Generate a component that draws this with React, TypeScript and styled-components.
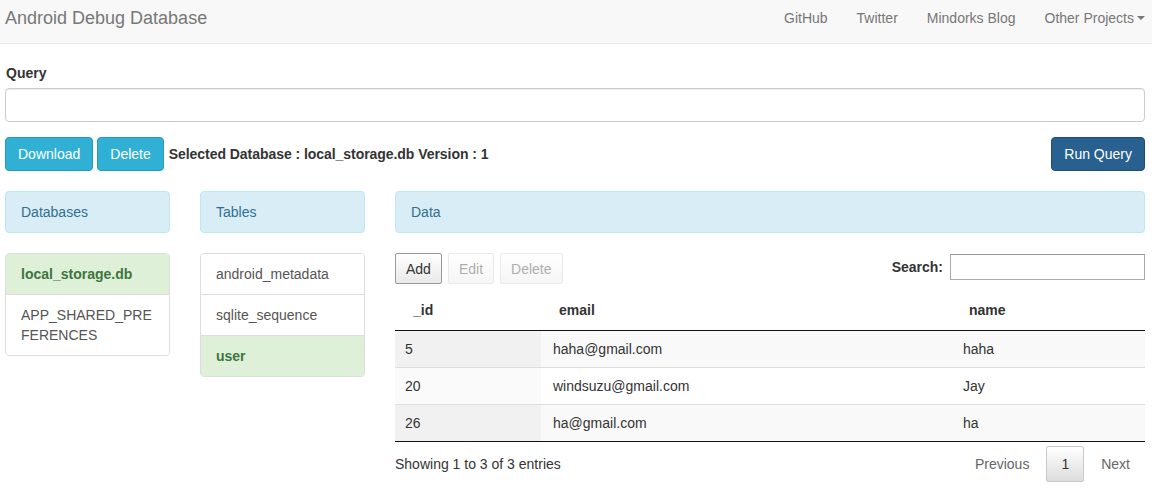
import * as React from 'react'
import styled, { createGlobalStyle } from 'styled-components'

const GlobalStyle = createGlobalStyle`
  * { box-sizing: border-box; }
  body {
    margin: 0;
    font-family: "Liberation Sans", Arial, sans-serif;
    font-size: 14px;
    line-height: 20px;
    color: #333;
    background: #fff;
  }
`

const Navbar = styled.nav`
  height: 44px;
  background: #f8f8f8;
  border-bottom: 1px solid #e7e7e7;
  display: flex;
  align-items: center;
  justify-content: space-between;
  padding: 0 7px 0 5px;
`

const Brand = styled.div`
  font-size: 18px;
  color: #777;
  margin-top: -8px;
`

const NavLinks = styled.div`
  display: flex;
  gap: 29px;
  margin-top: -8px;
`

const NavLink = styled.a`
  color: #777;
  text-decoration: none;
  display: flex;
  align-items: center;
`

const Caret = styled.span`
  display: inline-block;
  width: 0;
  height: 0;
  margin-left: 3px;
  border-top: 4px solid #777;
  border-left: 4px solid transparent;
  border-right: 4px solid transparent;
`

const Container = styled.div`
  padding: 19px 7px 0 5px;
`

const Label = styled.label`
  display: block;
  font-weight: bold;
  margin: 0 0 5px 1px;
`

const QueryInput = styled.input`
  display: block;
  width: 100%;
  height: 34px;
  border: 1px solid #ccc;
  border-radius: 4px;
  box-shadow: inset 0 1px 1px rgba(0, 0, 0, 0.075);
  margin-bottom: 15px;
  font: inherit;
`

const ActionRow = styled.div`
  display: flex;
  align-items: center;
  gap: 4px;
  margin-bottom: 20px;
`

const Btn = styled.button<{ $variant: 'info' | 'primary' }>`
  height: 34px;
  padding: 0 12px;
  font: inherit;
  color: #fff;
  border-radius: 4px;
  border: 1px solid ${p => (p.$variant === 'info' ? '#269abc' : '#204d74')};
  background: ${p => (p.$variant === 'info' ? '#31b0d5' : '#286090')};
  cursor: pointer;
`

const Selected = styled.span`
  font-weight: bold;
  margin-left: 1px;
  flex: 1;
  letter-spacing: -0.05px;
`

const Columns = styled.div`
  display: grid;
  grid-template-columns: 165px 165px 1fr;
  column-gap: 30px;
  align-items: start;
`

const PanelHeading = styled.div`
  height: 42px;
  padding: 10px 15px;
  background: #d9edf7;
  border: 1px solid #bce8f1;
  border-radius: 4px;
  color: #31708f;
  margin-bottom: 20px;
`

const ListGroup = styled.div`
  margin-top: 1px;
  border: 1px solid #ddd;
  border-radius: 4px;
  overflow: hidden;
`

const ListItem = styled.div<{ $active?: boolean }>`
  padding: 10px 15px;
  border-top: 1px solid #ddd;
  background: ${p => (p.$active ? '#dff0d8' : '#fff')};
  color: ${p => (p.$active ? '#3c763d' : '#555')};
  font-weight: ${p => (p.$active ? 'bold' : 'normal')};
  word-break: break-all;
  &:first-child { border-top: 0; }
`

const Toolbar = styled.div`
  display: flex;
  align-items: center;
  justify-content: space-between;
`

const ToolButtons = styled.div`
  display: flex;
  gap: 6px;
`

const SmallBtn = styled.button<{ $disabled?: boolean }>`
  height: 31px;
  padding: 0 10px;
  font: inherit;
  color: #333;
  border: 1px solid ${p => (p.$disabled ? '#ccc' : '#999')};
  border-radius: 2px;
  background: linear-gradient(to bottom, #fff 0%, #e9e9e9 100%);
  opacity: ${p => (p.$disabled ? 0.4 : 1)};
`

const SearchWrap = styled.label`
  display: flex;
  align-items: center;
  font-weight: bold;
  margin-top: -4px;
`

const SearchInput = styled.input`
  margin-left: 7px;
  width: 195px;
  height: 26px;
  border: 1px solid #aaa;
  border-top-color: #999;
  border-radius: 0;
  font: inherit;
`

const Table = styled.table`
  width: 100%;
  border-collapse: collapse;
  margin-top: 6px;
  border-bottom: 1px solid #111;
`

const Th = styled.th<{ $w: number }>`
  width: ${p => p.$w}px;
  text-align: left;
  padding: 10px 18px;
  font-weight: bold;
  border-bottom: 1px solid #111;
`

const Tr = styled.tr<{ $odd: boolean }>`
  background: ${p => (p.$odd ? '#f9f9f9' : '#fff')};
  border-top: 1px solid #ddd;
  &:first-child { border-top: 0; }
`

const Td = styled.td<{ $sorted?: boolean; $odd?: boolean; $pl: number }>`
  padding: 8px 10px 8px ${p => p.$pl}px;
  background: ${p => (p.$sorted ? (p.$odd ? '#f1f1f1' : '#fafafa') : 'transparent')};
`

const Footer = styled.div`
  display: flex;
  align-items: center;
  justify-content: space-between;
  padding-top: 4px;
`

const Pager = styled.div`
  display: flex;
  align-items: center;
  gap: 2px;
`

const PageLink = styled.span<{ $current?: boolean }>`
  padding: 7px 14px;
  border: 1px solid ${p => (p.$current ? '#cacaca' : 'transparent')};
  border-radius: 2px;
  background: ${p => (p.$current ? 'linear-gradient(to bottom, #fff 0%, #dcdcdc 100%)' : 'none')};
  color: ${p => (p.$current ? '#333' : '#666')};
`

const rows = [
  { id: '5', email: 'haha@gmail.com', name: 'haha' },
  { id: '20', email: 'windsuzu@gmail.com', name: 'Jay' },
  { id: '26', email: 'ha@gmail.com', name: 'ha' },
]

const App: React.FC = () => {
  return (
    <React.Fragment>
      <GlobalStyle />
      <Navbar>
        <Brand>Android Debug Database</Brand>
        <NavLinks>
          <NavLink>GitHub</NavLink>
          <NavLink>Twitter</NavLink>
          <NavLink>Mindorks Blog</NavLink>
          <NavLink>
            Other Projects<Caret />
          </NavLink>
        </NavLinks>
      </Navbar>
      <Container>
        <Label>Query</Label>
        <QueryInput />
        <ActionRow>
          <Btn $variant="info">Download</Btn>
          <Btn $variant="info">Delete</Btn>
          <Selected>Selected Database : local_storage.db Version : 1</Selected>
          <Btn $variant="primary">Run Query</Btn>
        </ActionRow>
        <Columns>
          <div>
            <PanelHeading>Databases</PanelHeading>
            <ListGroup>
              <ListItem $active>local_storage.db</ListItem>
              <ListItem>APP_SHARED_PREFERENCES</ListItem>
            </ListGroup>
          </div>
          <div>
            <PanelHeading>Tables</PanelHeading>
            <ListGroup>
              <ListItem>android_metadata</ListItem>
              <ListItem>sqlite_sequence</ListItem>
              <ListItem $active>user</ListItem>
            </ListGroup>
          </div>
          <div>
            <PanelHeading>Data</PanelHeading>
            <Toolbar>
              <ToolButtons>
                <SmallBtn>Add</SmallBtn>
                <SmallBtn $disabled>Edit</SmallBtn>
                <SmallBtn $disabled>Delete</SmallBtn>
              </ToolButtons>
              <SearchWrap>
                Search:
                <SearchInput />
              </SearchWrap>
            </Toolbar>
            <Table>
              <thead>
                <tr>
                  <Th $w={146}>_id</Th>
                  <Th $w={410}>email</Th>
                  <Th $w={194}>name</Th>
                </tr>
              </thead>
              <tbody>
                {rows.map((r, i) => (
                  <Tr key={r.id} $odd={i % 2 === 0}>
                    <Td $sorted $odd={i % 2 === 0} $pl={10}>{r.id}</Td>
                    <Td $pl={12}>{r.email}</Td>
                    <Td $pl={12}>{r.name}</Td>
                  </Tr>
                ))}
              </tbody>
            </Table>
            <Footer>
              <span>Showing 1 to 3 of 3 entries</span>
              <Pager>
                <PageLink>Previous</PageLink>
                <PageLink $current>1</PageLink>
                <PageLink>Next</PageLink>
              </Pager>
            </Footer>
          </div>
        </Columns>
      </Container>
    </React.Fragment>
  )
}

export default App
